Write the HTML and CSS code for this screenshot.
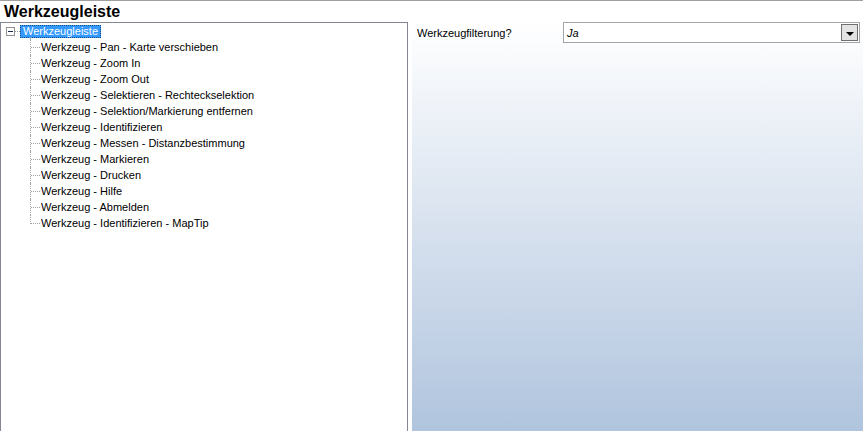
FILE: index.html
```html
<!DOCTYPE html>
<html lang="de">
<head>
  <meta charset="UTF-8">
  <title>Werkzeugleiste</title>
  <link rel="stylesheet" href="styles.css">
</head>
<body>
  <div class="header">Werkzeugleiste</div>
  <div class="main">
    <div class="tree">
      <div class="root">
        <span class="toggle"></span>
        <span class="stub"></span>
        <span class="label selected">Werkzeugleiste</span>
      </div>
      <ul class="children">
        <li>Werkzeug - Pan - Karte verschieben</li>
        <li>Werkzeug - Zoom In</li>
        <li>Werkzeug - Zoom Out</li>
        <li>Werkzeug - Selektieren - Rechteckselektion</li>
        <li>Werkzeug - Selektion/Markierung entfernen</li>
        <li>Werkzeug - Identifizieren</li>
        <li>Werkzeug - Messen - Distanzbestimmung</li>
        <li>Werkzeug - Markieren</li>
        <li>Werkzeug - Drucken</li>
        <li>Werkzeug - Hilfe</li>
        <li>Werkzeug - Abmelden</li>
        <li>Werkzeug - Identifizieren - MapTip</li>
      </ul>
    </div>
    <div class="props">
      <div class="prop-row">
        <div class="prop-label">Werkzeugfilterung?</div>
        <div class="combo">
          <span class="combo-value">Ja</span>
          <span class="combo-btn"><span class="arrow"></span></span>
        </div>
      </div>
    </div>
  </div>
</body>
</html>
```

FILE: styles.css
```css
html, body {
  margin: 0;
  height: 100%;
  overflow: hidden;
}
body {
  background: #fff;
  color: #000;
  font-family: "Liberation Sans", Arial, sans-serif;
  font-size: 11px;
}
.header {
  border-top: 1px solid #a0a0a0;
  height: 21px;
  line-height: 21px;
  padding-left: 4px;
  font-size: 16px;
  font-weight: bold;
}
.main {
  display: flex;
  gap: 4px;
  height: calc(100% - 22px);
}

/* tree */
.tree {
  width: 406px;
  border: 1px solid #828790;
  border-bottom: none;
  background: #fff;
}
.root {
  display: flex;
  align-items: center;
  height: 16px;
  padding-left: 5px;
}
.toggle {
  position: relative;
  width: 9px;
  height: 9px;
  box-sizing: border-box;
  border: 1px solid #919191;
  background: #fff;
}
.toggle::after {
  content: "";
  position: absolute;
  left: 1px;
  top: 3px;
  width: 5px;
  height: 1px;
  background: #1c2a45;
}
.stub {
  width: 5px;
  border-top: 1px dotted #a0a0a0;
}
.label {
  height: 13px;
  line-height: 13px;
  padding: 0 3px;
}
.selected {
  background: #3399ff;
  color: #fff;
  outline: 1px dotted #1a4d80;
  outline-offset: -1px;
}
.children {
  position: relative;
  list-style: none;
  margin: 0;
  padding: 0;
}
.children::before {
  content: "";
  position: absolute;
  left: 29px;
  top: -2px;
  height: 2px;
  border-left: 1px dotted #a0a0a0;
}
.children li {
  position: relative;
  height: 16px;
  line-height: 16px;
  padding-left: 40px;
  white-space: nowrap;
}
.children li::before {
  content: "";
  position: absolute;
  left: 30px;
  top: 8px;
  width: 9px;
  border-top: 1px dotted #a0a0a0;
}
.children li::after {
  content: "";
  position: absolute;
  left: 29px;
  top: 0;
  height: 16px;
  border-left: 1px dotted #a0a0a0;
}
.children li:last-child::after {
  height: 9px;
}

/* properties */
.props {
  flex: 1;
  background: linear-gradient(#fff, #b0c4de);
}
.prop-row {
  display: flex;
  height: 21px;
}
.prop-label {
  width: 151px;
  box-sizing: border-box;
  padding-left: 5px;
  line-height: 22px;
}
.combo {
  flex: 1;
  display: flex;
  align-items: center;
  margin-right: 3px;
  border: 1px solid #a5a5a5;
  background: #fff;
}
.combo-value {
  padding-left: 3px;
  font-style: italic;
}
.combo-btn {
  display: flex;
  align-items: center;
  justify-content: center;
  width: 17px;
  height: 17px;
  box-sizing: border-box;
  margin-left: auto;
  margin-right: 1px;
  border: 1px solid #6f6f6f;
  background: #e3e3e3;
}
.arrow {
  width: 0;
  height: 0;
  margin-top: 2px;
  border-left: 4px solid transparent;
  border-right: 4px solid transparent;
  border-top: 4px solid #000;
}
```
